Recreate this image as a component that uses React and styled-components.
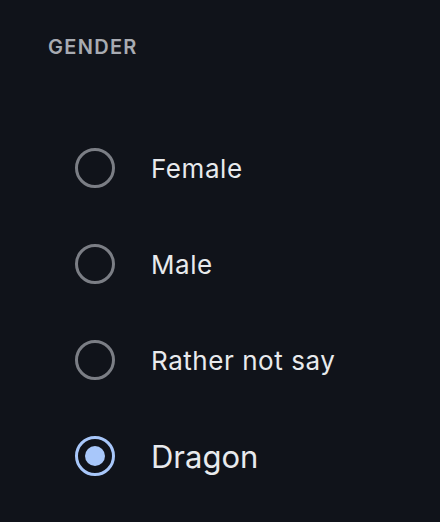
import React, { useState } from "react"
import styled, { createGlobalStyle } from "styled-components"

const GlobalStyle = createGlobalStyle`
  html, body {
    margin: 0;
    background: #10131a;
  }
  body {
    font-family: Inter, Roboto, "Noto Sans", sans-serif;
    -webkit-font-smoothing: antialiased;
  }
`

const Page = styled.div`
  padding: 35px 48px 0;
`

const Heading = styled.h2`
  margin: 0;
  font-size: 20px;
  line-height: 24px;
  font-weight: 600;
  letter-spacing: 1.3px;
  color: #a8abb2;
  text-transform: uppercase;
`

const Options = styled.ul`
  list-style: none;
  margin: 61px 0 0;
  padding: 0 0 0 27px;
`

const Option = styled.li`
  display: flex;
  align-items: center;
  height: 96px;
  gap: 36px;
  cursor: pointer;
`

const Ring = styled.span`
  box-sizing: border-box;
  width: 40px;
  height: 40px;
  flex: none;
  border-radius: 50%;
  border: 3px solid ${({ $checked }) => ($checked ? "#a8c7fa" : "#7b7e85")};
  display: flex;
  align-items: center;
  justify-content: center;

  &::after {
    content: "";
    width: 20px;
    height: 20px;
    border-radius: 50%;
    background: #a8c7fa;
    display: ${({ $checked }) => ($checked ? "block" : "none")};
  }
`

const Label = styled.span`
  font-size: ${({ $checked }) => ($checked ? "31px" : "26px")};
  letter-spacing: ${({ $checked }) => ($checked ? "0" : "0.55px")};
  color: #e8eaed;
`

const choices = ["Female", "Male", "Rather not say", "Dragon"]

export default function App() {
  const [value, setValue] = useState("Dragon")

  return (
    <Page>
      <GlobalStyle />
      <Heading>Gender</Heading>
      <Options role="radiogroup">
        {choices.map((c) => (
          <Option
            key={c}
            role="radio"
            aria-checked={value === c}
            onClick={() => setValue(c)}
          >
            <Ring $checked={value === c} />
            <Label $checked={value === c}>{c}</Label>
          </Option>
        ))}
      </Options>
    </Page>
  )
}
